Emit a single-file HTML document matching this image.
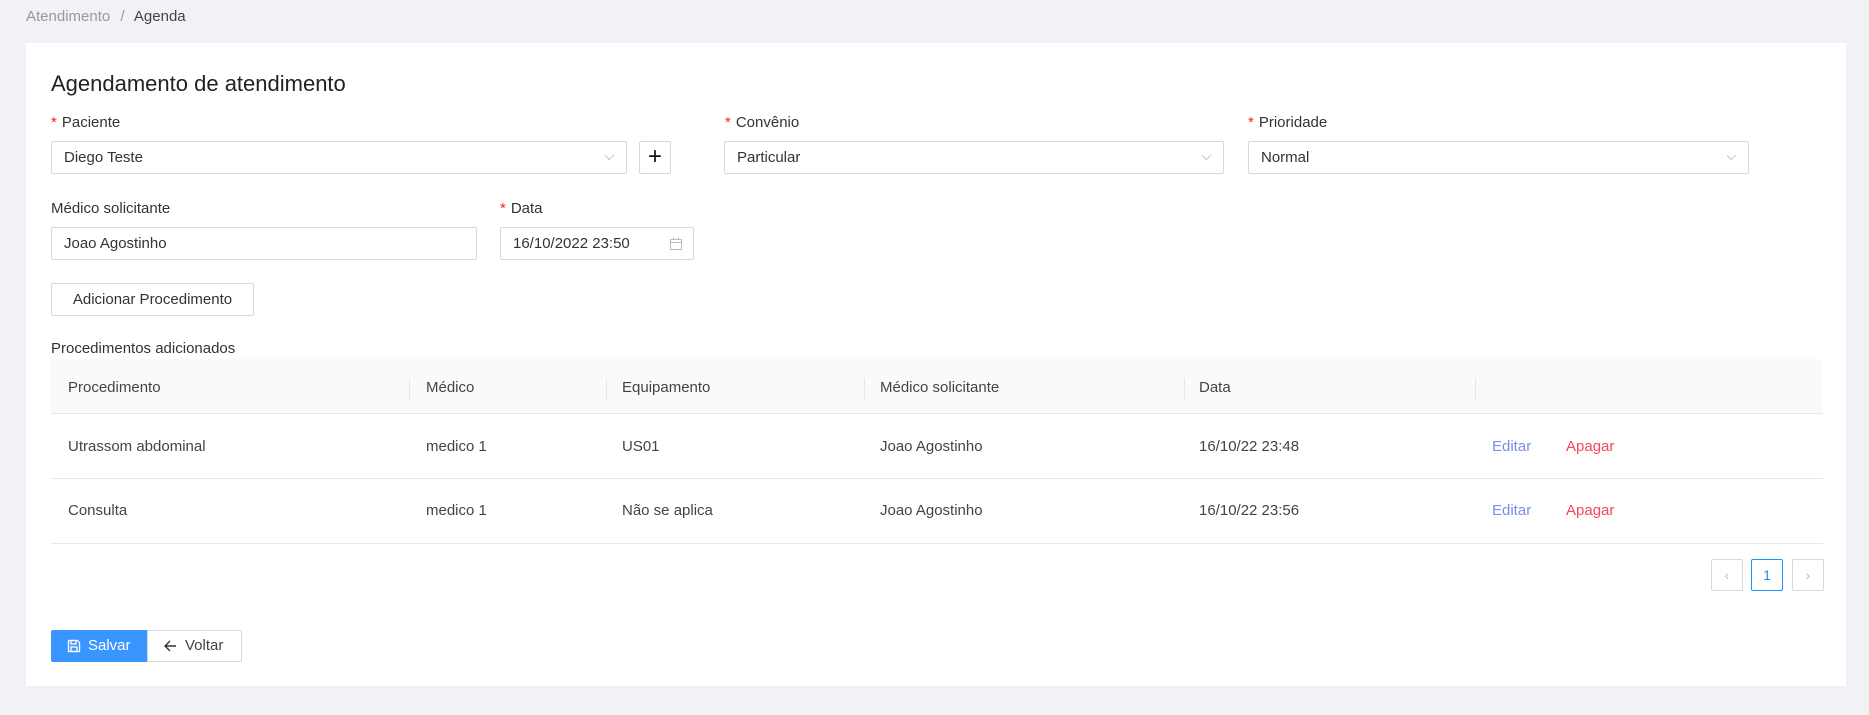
<!DOCTYPE html>
<html><head><meta charset="utf-8"><style>
*{box-sizing:border-box;margin:0;padding:0}
body{width:1869px;height:715px;background:#f0f2f5;font-family:"Liberation Sans",sans-serif;color:#333;font-size:15px;position:relative;overflow:hidden}
.a{position:absolute}
.card{left:26px;top:43px;width:1820px;height:643px;background:#fff}
.lbl{font-size:15px;color:#333;line-height:20px}
.lbl b{color:#f5222d;font-weight:normal;margin-right:5px}
.inp{border:1px solid #d9d9d9;border-radius:2px;background:#fff;font-size:15px;line-height:31px;padding-left:12px;color:#333}
.chev{position:absolute;right:13px;top:10px;width:7px;height:7px;border-right:1px solid #c4c4c4;border-bottom:1px solid #c4c4c4;transform:rotate(45deg) scaleX(0.9)}
.th{font-size:15px;color:#444;line-height:20px}
.sep{width:1px;height:22px;background:#e8e8e8;top:378px}
.td{font-size:15px;color:#444;line-height:20px}
.pg{border:1px solid #d9d9d9;border-radius:2px;width:32px;height:32px;top:559px;text-align:center;line-height:30px;color:#bbb;font-size:14px}
</style></head><body>
<div class="a" style="left:26px;top:8px;font-size:15px;color:#999">Atendimento <span style="margin:0 6px">/</span> <span style="color:#444">Agenda</span></div>
<div class="a card"></div>
<div class="a" style="left:51px;top:71px;font-size:22px;color:#222">Agendamento de atendimento</div>

<div class="a lbl" style="left:51px;top:113px"><b>*</b>Paciente</div>
<div class="a inp" style="left:51px;top:141px;width:576px;height:33px">Diego Teste<span class="chev"></span></div>
<div class="a inp" style="left:639px;top:141px;width:32px;height:33px;padding:0;text-align:center;font-size:24px;line-height:29px;color:#111">+</div>
<div class="a lbl" style="left:725px;top:113px"><b>*</b>Convênio</div>
<div class="a inp" style="left:724px;top:141px;width:500px;height:33px">Particular<span class="chev"></span></div>
<div class="a lbl" style="left:1248px;top:113px"><b>*</b>Prioridade</div>
<div class="a inp" style="left:1248px;top:141px;width:501px;height:33px">Normal<span class="chev"></span></div>

<div class="a lbl" style="left:51px;top:199px">Médico solicitante</div>
<div class="a inp" style="left:51px;top:227px;width:426px;height:33px">Joao Agostinho</div>
<div class="a lbl" style="left:500px;top:199px"><b>*</b>Data</div>
<div class="a inp" style="left:500px;top:227px;width:194px;height:33px">16/10/2022 23:50
<svg class="a" style="right:10px;top:9px" width="14" height="14" viewBox="0 0 14 14" fill="none" stroke="#bbb"><rect x="1.5" y="2.5" width="11" height="10"/><line x1="1.5" y1="5.5" x2="12.5" y2="5.5"/><line x1="4.5" y1="0.5" x2="4.5" y2="3"/><line x1="9.5" y1="0.5" x2="9.5" y2="3"/></svg></div>

<div class="a inp" style="left:51px;top:283px;width:203px;height:33px;padding:0;text-align:center">Adicionar Procedimento</div>
<div class="a lbl" style="left:51px;top:339px">Procedimentos adicionados</div>

<div class="a" style="left:51px;top:359px;width:1772px;height:55px;background:#fafafa;border-bottom:1px solid #e8e8e8"></div>
<div class="a th" style="left:68px;top:378px">Procedimento</div>
<div class="a sep" style="left:409px"></div><div class="a th" style="left:426px;top:378px">Médico</div>
<div class="a sep" style="left:606px"></div><div class="a th" style="left:622px;top:378px">Equipamento</div>
<div class="a sep" style="left:864px"></div><div class="a th" style="left:880px;top:378px">Médico solicitante</div>
<div class="a sep" style="left:1184px"></div><div class="a th" style="left:1199px;top:378px">Data</div>
<div class="a sep" style="left:1475px"></div>

<div class="a" style="left:51px;top:478px;width:1772px;height:1px;background:#e8e8e8"></div>
<div class="a" style="left:51px;top:543px;width:1772px;height:1px;background:#e8e8e8"></div>
<div class="a td" style="left:68px;top:437px">Utrassom abdominal</div>
<div class="a td" style="left:426px;top:437px">medico 1</div>
<div class="a td" style="left:622px;top:437px">US01</div>
<div class="a td" style="left:880px;top:437px">Joao Agostinho</div>
<div class="a td" style="left:1199px;top:437px">16/10/22 23:48</div>
<div class="a td" style="left:1492px;top:437px;color:#7b8cf0">Editar</div>
<div class="a td" style="left:1566px;top:437px;color:#f5475a">Apagar</div>
<div class="a td" style="left:68px;top:501px">Consulta</div>
<div class="a td" style="left:426px;top:501px">medico 1</div>
<div class="a td" style="left:622px;top:501px">Não se aplica</div>
<div class="a td" style="left:880px;top:501px">Joao Agostinho</div>
<div class="a td" style="left:1199px;top:501px">16/10/22 23:56</div>
<div class="a td" style="left:1492px;top:501px;color:#7b8cf0">Editar</div>
<div class="a td" style="left:1566px;top:501px;color:#f5475a">Apagar</div>

<div class="a pg" style="left:1711px">&#8249;</div>
<div class="a pg" style="left:1751px;border-color:#1890ff;color:#1890ff">1</div>
<div class="a pg" style="left:1792px">&#8250;</div>

<div class="a" style="left:51px;top:630px;width:97px;height:32px;background:#3a96ff;border-radius:2px 0 0 2px;color:#fff;font-size:15px;line-height:32px;padding-left:37px">Salvar
<svg class="a" style="left:16px;top:9px" width="14" height="14" viewBox="0 0 14 14" fill="none" stroke="#fff" stroke-width="1.3"><path d="M1.5 1.5h9l2 2v9h-11z"/><rect x="4" y="1.5" width="5" height="3.5"/><rect x="4" y="8" width="6" height="4.5"/></svg></div>
<div class="a" style="left:147px;top:630px;width:95px;height:32px;border:1px solid #d9d9d9;border-radius:0 2px 2px 0;font-size:15px;line-height:30px;padding-left:37px;color:#444">Voltar
<svg class="a" style="left:15px;top:8px" width="14" height="14" viewBox="0 0 14 14" fill="none" stroke="#333" stroke-width="1.4"><path d="M13 7H2M7 2L2 7l5 5"/></svg></div>
</body></html>
